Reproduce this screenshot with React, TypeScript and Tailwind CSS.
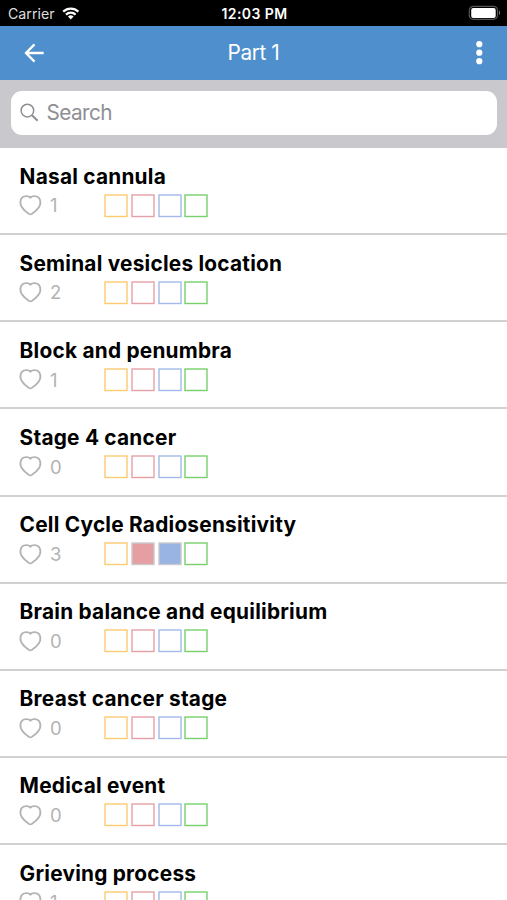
import { clsx } from "clsx";

type Topic = {
  title: string;
  likes: number;
  filled?: string[];
};

const topics: Topic[] = [
  { title: "Nasal cannula", likes: 1 },
  { title: "Seminal vesicles location", likes: 2 },
  { title: "Block and penumbra", likes: 1 },
  { title: "Stage 4 cancer", likes: 0 },
  { title: "Cell Cycle Radiosensitivity", likes: 3, filled: ["red", "blue"] },
  { title: "Brain balance and equilibrium", likes: 0 },
  { title: "Breast cancer stage", likes: 0 },
  { title: "Medical event", likes: 0 },
  { title: "Grieving process", likes: 1 }
];

const boxes = [
  { name: "orange", line: "stroke-[#fdcb72] fill-white", fill: "fill-[#fdcb72]" },
  { name: "red", line: "stroke-[#e5a0a6] fill-white", fill: "fill-[#e59ea2]" },
  { name: "blue", line: "stroke-[#a3bae8] fill-white", fill: "fill-[#99b3e3]" },
  { name: "green", line: "stroke-[#77d06c] fill-white", fill: "fill-[#6bcb60]" }
];

function StatusBar() {
  return (
    <div className="flex h-[25.5px] items-center justify-between bg-black pr-[6px] pl-[8px] text-white">
      <div className="flex flex-1 items-center gap-[7px] pt-[2px]">
        <span className="text-[14.2px] leading-none text-[#dedede]">Carrier</span>
        <svg width="18" height="13" viewBox="0 0 18 13" fill="none" stroke="#fff" strokeWidth="2.2">
          <path d="M1.2 4.6a11 11 0 0 1 15.2 0" />
          <path d="M4 7.6a7 7 0 0 1 9.6 0" />
          <path d="M8.8 12.4 6 9.6a4 4 0 0 1 5.6 0z" fill="#fff" stroke="none" />
        </svg>
      </div>
      <span className="pt-[2px] text-[14px] leading-none font-semibold tracking-[0.4px]">12:03 PM</span>
      <div className="flex flex-1 items-center justify-end">
        <svg width="33" height="16" viewBox="0 0 33 16">
          <rect x="1.3" y="1.3" width="28.2" height="13" rx="4" fill="#000" stroke="#555" strokeWidth="1.2" />
          <rect x="3.2" y="3.1" width="24.5" height="9.8" rx="2" fill="#fff" />
          <path d="M31 5.6c1.4.5 1.4 4 0 4.5z" fill="#777" />
        </svg>
      </div>
    </div>
  );
}

function NavBar() {
  return (
    <div className="flex h-[54px] items-center bg-[#4f8fcd] pr-[21px] pl-[23px] text-white">
      <svg width="22" height="22" viewBox="0 0 22 22" fill="none" stroke="#fff" strokeWidth="2.3">
        <path d="M20.7 11H3.3M11.5 2.4 3 11l8.5 8.6" />
      </svg>
      <h1 className="flex-1 pt-[2px] pr-[10px] text-center text-[20.8px] leading-none font-normal tracking-[-0.4px]">
        Part 1
      </h1>
      <svg width="14" height="26" viewBox="0 0 14 26" fill="#fff">
        <circle cx="7.3" cy="4.2" r="3.1" />
        <circle cx="7.3" cy="12.7" r="3.1" />
        <circle cx="7.3" cy="21.2" r="3.1" />
      </svg>
    </div>
  );
}

function SearchBar() {
  return (
    <div className="h-[68.5px] bg-[#c9c8cd] px-[10.5px] pt-[11.5px]">
      <div className="flex h-[44px] items-center rounded-[11px] bg-white pl-[9px]">
        <svg width="20" height="20" viewBox="0 0 20 20" fill="none" stroke="#8e8e93">
          <circle cx="7.4" cy="7.6" r="6.3" strokeWidth="1.5" />
          <path d="m12 12.2 5.6 5.6" strokeWidth="2" />
        </svg>
        <span className="pl-[7px] text-[20.8px] leading-none tracking-[-0.6px] text-[#8e8e93]">Search</span>
      </div>
    </div>
  );
}

function HeartIcon() {
  return (
    <svg width="23" height="21" viewBox="0 0 23 21" fill="none" stroke="#b3b3b3" strokeWidth="1.9">
      <path d="M11.4 2.6C9.8.9 5.4.4 3.1 2.7.8 5 .9 9.3 2.9 12.3c1.7 2.7 4.9 5.3 7.2 6.7q1.3.7 2.6 0c2.3-1.4 5.5-4 7.2-6.7 2-3 2.1-7.3-.2-9.6C17.4.4 13 .9 11.4 2.6z" />
    </svg>
  );
}

function TopicRow({ topic }: { topic: Topic }) {
  return (
    <li className="h-[87.15px] border-b-2 border-[#d1d1d2] pt-[15.5px] pl-[19px]">
      <h2 className="pl-[0.6px] text-[20.8px] leading-[26px] font-bold tracking-[0.24px] text-black">{topic.title}</h2>
      <div className="mt-[4px] flex h-[24px] items-center">
        <HeartIcon />
        <span className="w-[62px] pl-[8px] text-[18.5px] leading-none text-[#b3b3b3]">{topic.likes}</span>
        <div className="flex gap-[2.8px]">
          {boxes.map((box) => (
            <svg key={box.name} width="24" height="24" viewBox="0 0 24 24" strokeWidth="1.4">
              <rect
                x="1"
                y="1"
                width="22"
                height="21.5"
                className={clsx(topic.filled?.includes(box.name) ? ["stroke-[#c9c9ce]", box.fill] : box.line)}
              />
            </svg>
          ))}
        </div>
      </div>
    </li>
  );
}

export default function App() {
  return (
    <main className="h-[900px] w-[507px] overflow-hidden bg-white font-['Inter',sans-serif]">
      <StatusBar />
      <NavBar />
      <SearchBar />
      <ul>
        {topics.map((topic) => (
          <TopicRow key={topic.title} topic={topic} />
        ))}
      </ul>
    </main>
  );
}
